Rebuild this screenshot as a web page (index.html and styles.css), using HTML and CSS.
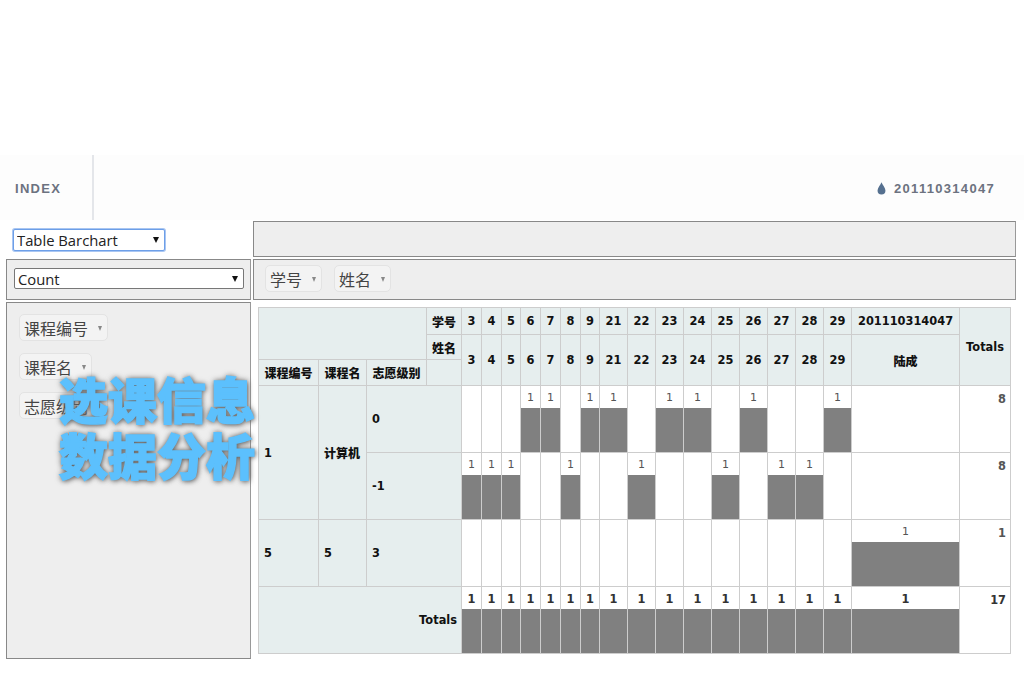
FILE: index.html
```html
<!DOCTYPE html>
<html lang="zh">
<head>
<meta charset="utf-8">
<title>选课信息数据分析</title>
<link rel="stylesheet" href="styles.css">
</head>
<body>
<div class="top-space"></div>
<nav class="nav">
  <div class="brand">INDEX</div>
  <div class="user">
    <svg class="drop" viewBox="0 0 10 14" width="9" height="13"><path d="M5 0C4 3 .6 6 .6 9.300a4.400 4.400 0 0 0 8.800 0C9.400 6 6 3 5 0z"/></svg>
    <span>201110314047</span>
  </div>
</nav>
<main class="ui">
  <div class="cell-plain">
    <span class="sel sel-r"><select class="focus"><option>Table Barchart</option></select></span>
  </div>
  <div class="box"></div>
  <div class="box box-agg">
    <span class="sel sel-a"><select><option>Count</option></select></span>
  </div>
  <div class="box box-cols">
    <span class="pill">学号<i class="tri"></i></span>
    <span class="pill">姓名<i class="tri"></i></span>
  </div>
  <div class="box box-rows">
    <span class="pill">课程编号<i class="tri"></i></span>
    <span class="pill">课程名<i class="tri"></i></span>
    <span class="pill">志愿级别<i class="tri"></i></span>
  </div>
  <div class="box-out">
    <table class="pvt">
      <colgroup>
        <col class="w60"><col class="w48"><col class="w60"><col class="w35">
        <col class="w20"><col class="w20"><col class="w19"><col class="w20"><col class="w20"><col class="w20"><col class="w19">
        <col class="w28"><col class="w28"><col class="w28"><col class="w28"><col class="w28"><col class="w28"><col class="w28"><col class="w28"><col class="w28">
        <col class="w108"><col class="w51">
      </colgroup>
      <thead>
        <tr class="h1">
          <th colspan="3" rowspan="2"></th><th class="cjk">学号</th>
          <th>3</th><th>4</th><th>5</th><th>6</th><th>7</th><th>8</th><th>9</th><th>21</th><th>22</th><th>23</th><th>24</th><th>25</th><th>26</th><th>27</th><th>28</th><th>29</th><th>201110314047</th>
          <th rowspan="3">Totals</th>
        </tr>
        <tr class="h2">
          <th class="cjk">姓名</th>
          <th rowspan="2">3</th><th rowspan="2">4</th><th rowspan="2">5</th><th rowspan="2">6</th><th rowspan="2">7</th><th rowspan="2">8</th><th rowspan="2">9</th><th rowspan="2">21</th><th rowspan="2">22</th><th rowspan="2">23</th><th rowspan="2">24</th><th rowspan="2">25</th><th rowspan="2">26</th><th rowspan="2">27</th><th rowspan="2">28</th><th rowspan="2">29</th><th class="cjk" rowspan="2">陆成</th>
        </tr>
        <tr class="h3"><th class="cjk">课程编号</th><th class="cjk">课程名</th><th class="cjk">志愿级别</th><th></th></tr>
      </thead>
      <tbody>
        <tr>
          <th class="lab" rowspan="2">1</th><th class="lab cjk" rowspan="2">计算机</th><th class="lab" colspan="2">0</th>
          <td></td><td></td><td></td>
          <td><div class="n">1</div><div class="bar"></div></td>
          <td><div class="n">1</div><div class="bar"></div></td>
          <td></td>
          <td><div class="n">1</div><div class="bar"></div></td>
          <td><div class="n">1</div><div class="bar"></div></td>
          <td></td>
          <td><div class="n">1</div><div class="bar"></div></td>
          <td><div class="n">1</div><div class="bar"></div></td>
          <td></td>
          <td><div class="n">1</div><div class="bar"></div></td>
          <td></td><td></td>
          <td><div class="n">1</div><div class="bar"></div></td>
          <td></td>
          <td class="tot">8</td>
        </tr>
        <tr>
          <th class="lab" colspan="2">-1</th>
          <td><div class="n">1</div><div class="bar"></div></td>
          <td><div class="n">1</div><div class="bar"></div></td>
          <td><div class="n">1</div><div class="bar"></div></td>
          <td></td><td></td>
          <td><div class="n">1</div><div class="bar"></div></td>
          <td></td><td></td>
          <td><div class="n">1</div><div class="bar"></div></td>
          <td></td><td></td>
          <td><div class="n">1</div><div class="bar"></div></td>
          <td></td>
          <td><div class="n">1</div><div class="bar"></div></td>
          <td><div class="n">1</div><div class="bar"></div></td>
          <td></td><td></td>
          <td class="tot">8</td>
        </tr>
        <tr>
          <th class="lab">5</th><th class="lab">5</th><th class="lab" colspan="2">3</th>
          <td></td><td></td><td></td><td></td><td></td><td></td><td></td><td></td><td></td><td></td><td></td><td></td><td></td><td></td><td></td><td></td>
          <td><div class="n">1</div><div class="bar"></div></td>
          <td class="tot">1</td>
        </tr>
        <tr class="grand">
          <th class="total-label" colspan="4">Totals</th>
          <td><div class="n">1</div><div class="bar"></div></td>
          <td><div class="n">1</div><div class="bar"></div></td>
          <td><div class="n">1</div><div class="bar"></div></td>
          <td><div class="n">1</div><div class="bar"></div></td>
          <td><div class="n">1</div><div class="bar"></div></td>
          <td><div class="n">1</div><div class="bar"></div></td>
          <td><div class="n">1</div><div class="bar"></div></td>
          <td><div class="n">1</div><div class="bar"></div></td>
          <td><div class="n">1</div><div class="bar"></div></td>
          <td><div class="n">1</div><div class="bar"></div></td>
          <td><div class="n">1</div><div class="bar"></div></td>
          <td><div class="n">1</div><div class="bar"></div></td>
          <td><div class="n">1</div><div class="bar"></div></td>
          <td><div class="n">1</div><div class="bar"></div></td>
          <td><div class="n">1</div><div class="bar"></div></td>
          <td><div class="n">1</div><div class="bar"></div></td>
          <td><div class="n">1</div><div class="bar"></div></td>
          <td class="tot">17</td>
        </tr>
      </tbody>
    </table>
  </div>
</main>
<div class="banner">选课信息<br>数据分析</div>
</body>
</html>
```
FILE: styles.css
```css
* { box-sizing: border-box; }
html, body { margin: 0; padding: 0; }
body {
  position: relative;
  height: 692px;
  overflow: hidden;
  background: #fff;
  font-family: "Open Sans", "Noto Sans CJK SC", sans-serif;
  color: #333;
}
.top-space { height: 155px; }
.nav {
  height: 65px;
  background: #fdfdfd;
  display: flex;
  align-items: center;
  justify-content: space-between;
  padding-right: 29px;
  font-family: "Liberation Sans", sans-serif;
  font-weight: 700;
  font-size: 13px;
  letter-spacing: 1.3px;
  color: #6c7280;
}
.brand {
  width: 94px;
  height: 100%;
  padding-left: 15px;
  line-height: 67px;
  border-right: 2px solid #e4e6ea;
}
.user { display: flex; align-items: center; gap: 8px; padding-top: 2px; }
.drop { fill: #55708f; }

.ui {
  display: grid;
  grid-template-columns: 245px 763px;
  grid-template-rows: 36px 41px 357px;
  column-gap: 2px;
  row-gap: 2px;
  margin: 1px 0 0 6px;
}
.box {
  background: #eee;
  border: 1px solid #888;
  border-right-color: #999;
}
.cell-plain { padding: 8px 0 0 7px; }
.box-agg { padding: 8px 0 0 7px; }
.box-cols { display: flex; align-items: flex-start; gap: 12px; padding: 5px 0 0 11px; }
.box-rows {
  display: flex;
  flex-direction: column;
  align-items: flex-start;
  gap: 12px;
  padding: 11px 0 0 12px;
}
.box-out { padding: 5px 0 0 5px; }

.sel { position: relative; display: block; }
.sel::after {
  content: "";
  position: absolute;
  top: 8px;
  right: 6px;
  border-left: 3px solid transparent;
  border-right: 3px solid transparent;
  border-top: 6px solid #111;
  pointer-events: none;
}
.sel select {
  appearance: none;
  display: block;
  width: 100%;
  height: 100%;
  margin: 0;
  padding: 0 0 3px 3px;
  background: #fff;
  border: 1px solid #777;
  border-radius: 2px;
  font-family: "Open Sans", sans-serif;
  font-size: 14.800px;
  color: #222;
}
.sel-r { width: 152px; height: 22px; }
.sel-a { width: 230px; height: 21px; }
.sel select.focus { border: 1px solid #6d9fe8; box-shadow: 0 0 0 1px #a9c6f2; }

.pill {
  display: inline-flex;
  align-items: center;
  height: 27px;
  padding: 0 5px 0 4px;
  background: #f3f3f3;
  border: 1px solid #e3e3e3;
  border-radius: 5px;
  font-family: "Noto Sans CJK SC", sans-serif;
  font-size: 16px;
  color: #444;
}
.tri {
  display: inline-block;
  margin-left: 10px;
  margin-top: 2px;
  border-left: 2.500px solid transparent;
  border-right: 2.500px solid transparent;
  border-top: 5px solid #888;
}

.pvt {
  table-layout: fixed;
  width: 752px;
  border-collapse: collapse;
  font-family: "DejaVu Sans", Verdana, "Noto Sans CJK SC", sans-serif;
  font-size: 11.400px;
}
.w19 { width: 19px; }
.w20 { width: 20px; }
.w28 { width: 28px; }
.w35 { width: 35px; }
.w48 { width: 48px; }
.w51 { width: 51px; }
.w60 { width: 60px; }
.w108 { width: 108px; }
.pvt th, .pvt td { border: 1px solid #cdcdcd; padding: 0; }
.pvt th {
  background: #e6eeee;
  color: #111;
  font-weight: 700;
  white-space: nowrap;
}
.pvt th.cjk { font-size: 12px; font-family: "Noto Sans CJK SC", sans-serif; font-weight: 900; }
.h1 { height: 27px; }
.h2 { height: 25px; }
.h3 { height: 26px; }
.pvt th.lab { text-align: left; padding-left: 5px; }
.pvt th.total-label { text-align: right; padding-right: 4px; }
.pvt td { vertical-align: top; text-align: center; background: #fff; color: #555; height: 67px; }
.n { height: 22px; line-height: 24px; font-size: 11px; }
.bar { height: 44px; background: #808080; }
.grand .n { font-weight: 700; color: #333; font-size: 11.400px; }
.pvt td.tot { text-align: right; padding: 6px 4px 0 0; font-weight: 700; color: #555; }
.grand td.tot { color: #333; }

.banner {
  position: absolute;
  left: 59px;
  top: 370px;
  font-family: "Noto Sans CJK SC", sans-serif;
  font-weight: 900;
  font-size: 49px;
  line-height: 56px;
  color: #5cc0fd;
  -webkit-text-stroke: 1.500px #5cc0fd;
  text-shadow: 0 0 6px #666, 1px 1px 5px #666;
  white-space: nowrap;
}
```
